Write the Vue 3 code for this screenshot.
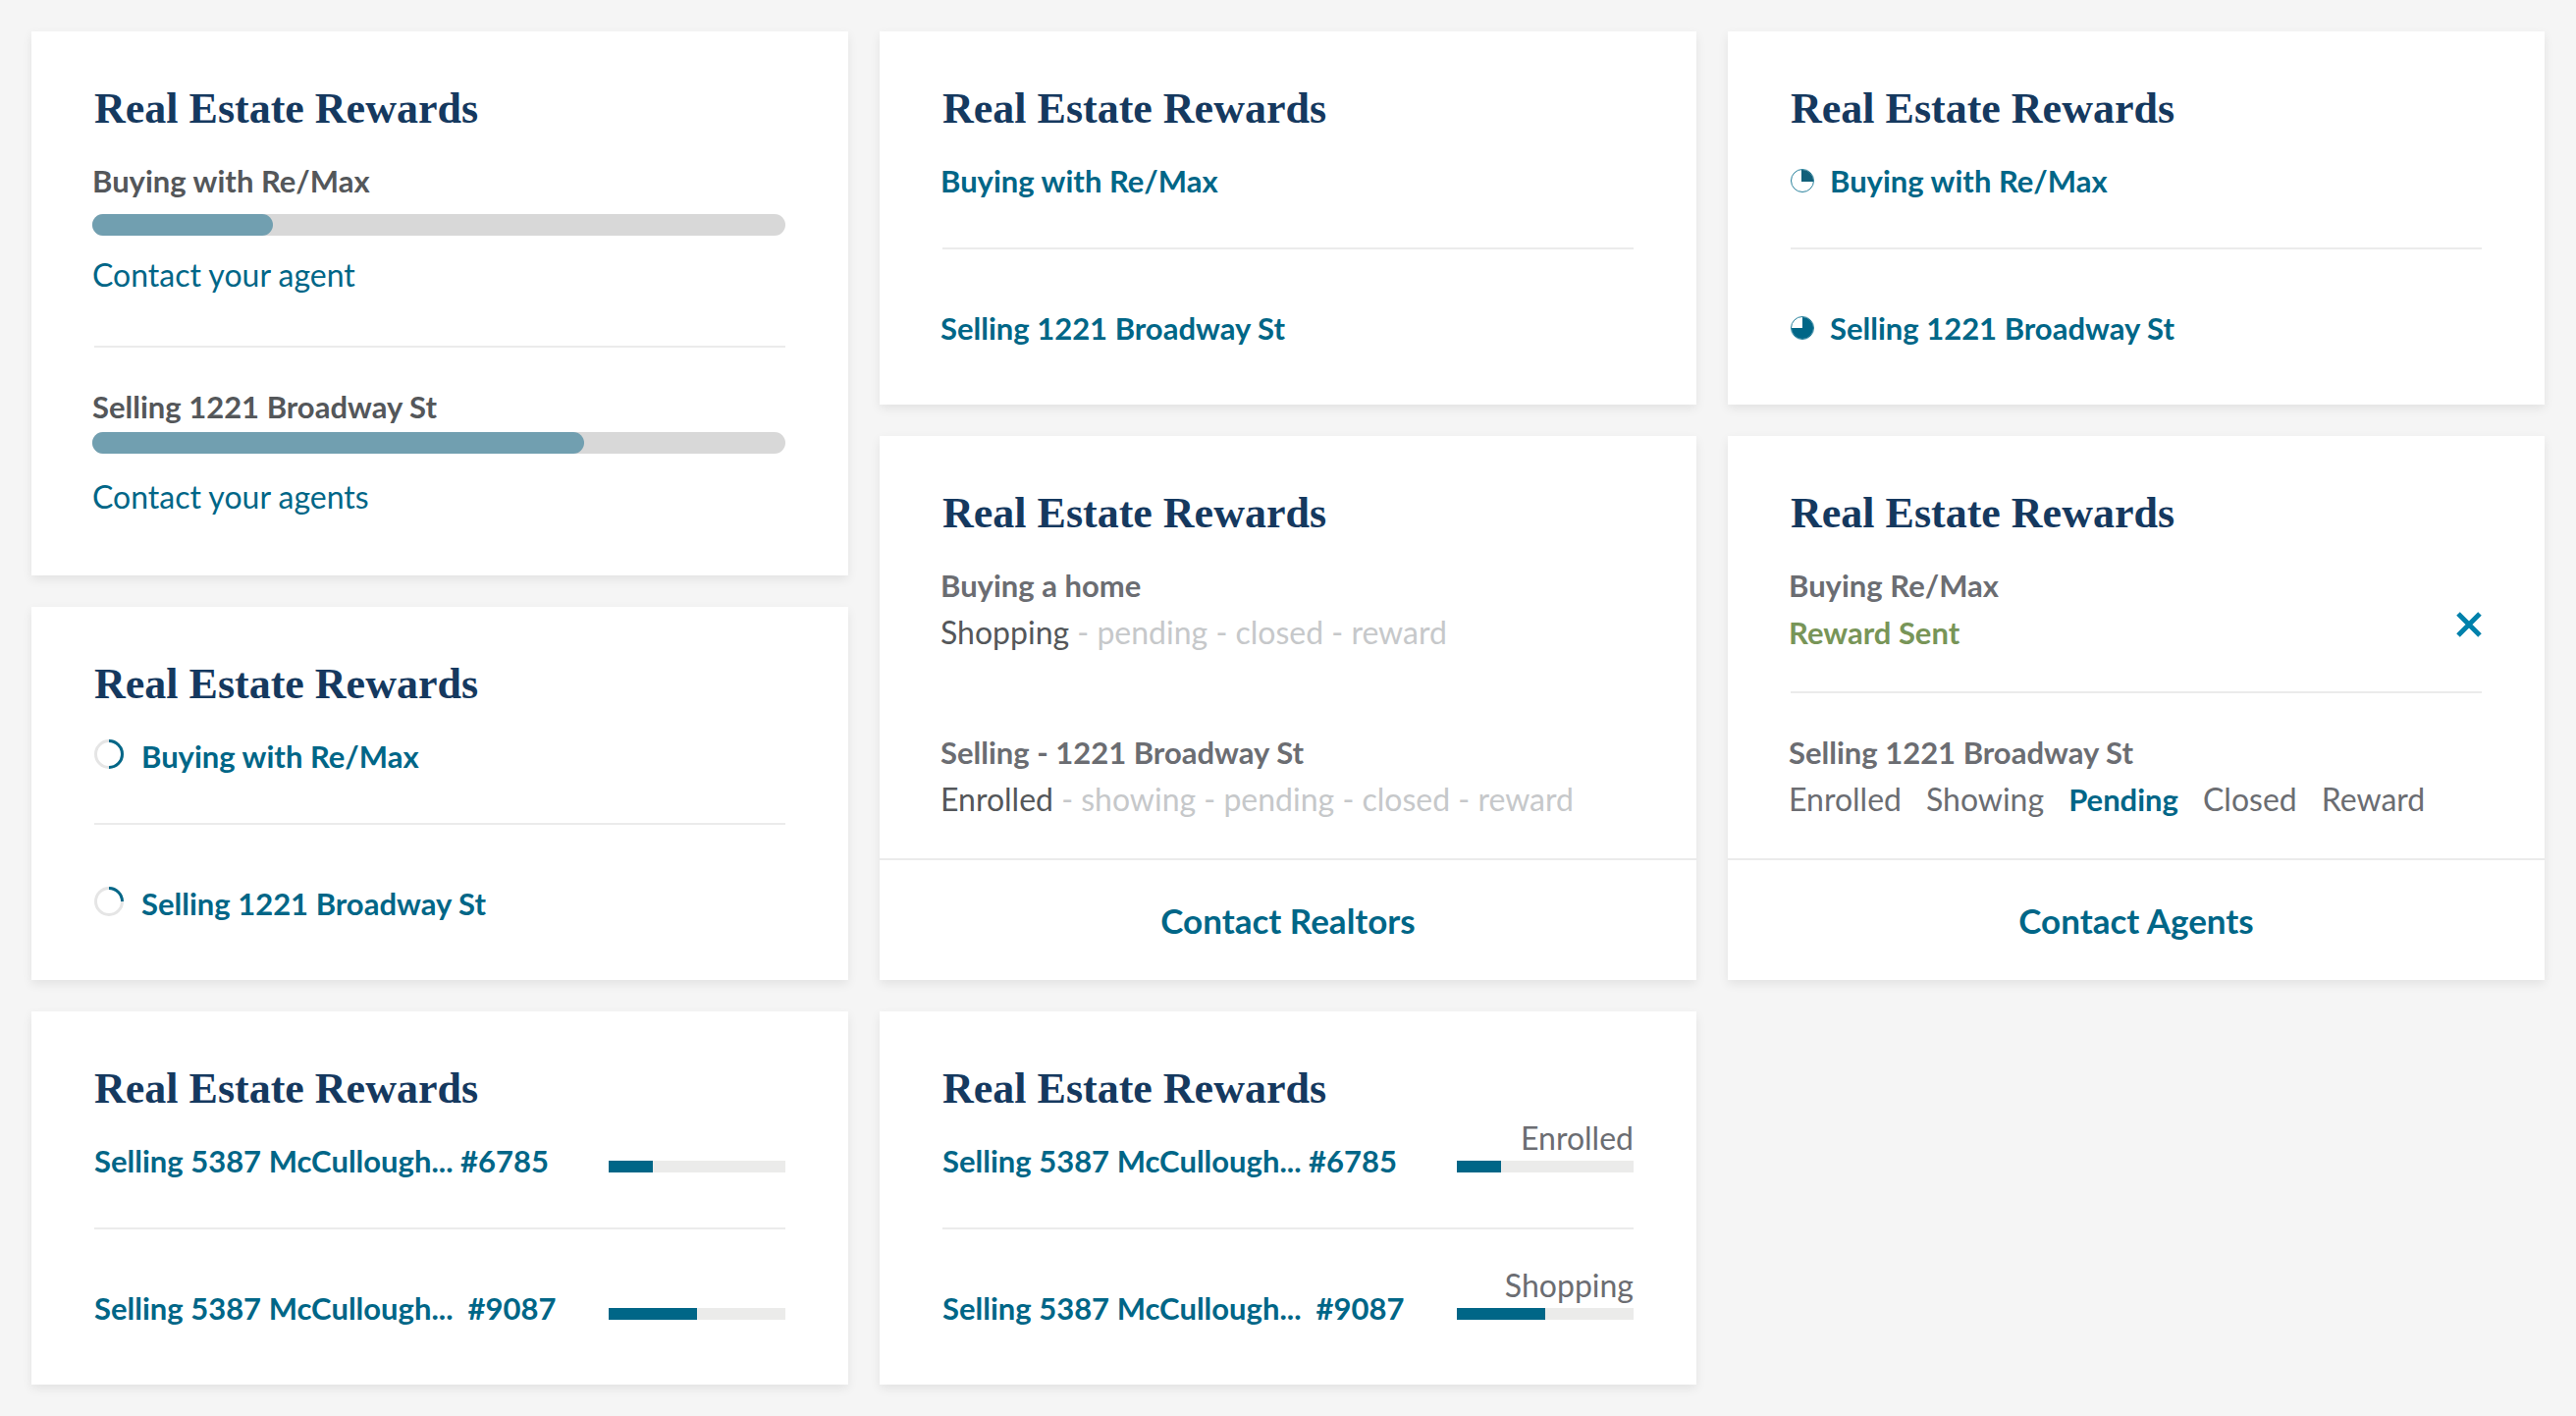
<script setup>
const title = 'Real Estate Rewards'

const barDeals = [
  { name: 'Buying with Re/Max', percent: 26, action: 'Contact your agent' },
  { name: 'Selling 1221 Broadway St', percent: 71, action: 'Contact your agents' },
]

// Rings are 30px wide; the arc is the completed share of the deal.
const ringDeals = [
  { name: 'Buying with Re/Max', arc: 'M15 1.5a13.5 13.5 0 0 1 0 27' },
  { name: 'Selling 1221 Broadway St', arc: 'M15 1.5a13.5 13.5 0 0 1 13.5 13.5' },
]

const linkDeals = ['Buying with Re/Max', 'Selling 1221 Broadway St']

const pieDeals = [
  { name: 'Buying with Re/Max', wedge: 'M11 13V1h1a11 11 0 0 1 11 11v1z', fill: '#12607a' },
  { name: 'Selling 1221 Broadway St', wedge: 'M12 12V1a11 11 0 1 1-11 11z', fill: '#006687' },
]

const meterDeals = [
  { name: 'Selling 5387 McCullough... #6785', percent: 25, stage: 'Enrolled' },
  { name: 'Selling 5387 McCullough...\u00a0 #9087', percent: 50, stage: 'Shopping' },
]

const trailDeals = [
  { name: 'Buying a home', current: 'Shopping', rest: ' - pending - closed - reward' },
  { name: 'Selling - 1221 Broadway St', current: 'Enrolled', rest: ' - showing - pending - closed - reward' },
]

const stages = ['Enrolled', 'Showing', 'Pending', 'Closed', 'Reward']
const currentStage = 'Pending'
</script>

<template>
  <main class="board">
    <div class="column">
      <section class="card">
        <h2 class="title">{{ title }}</h2>
        <div v-for="deal in barDeals" :key="deal.name" class="bar-deal">
          <p class="name dark hang">{{ deal.name }}</p>
          <div class="bar hang" role="progressbar" :aria-label="deal.name" :aria-valuenow="deal.percent">
            <div class="bar-fill" :style="{ width: deal.percent + '%' }"></div>
          </div>
          <a class="text-link hang" href="#">{{ deal.action }}</a>
        </div>
      </section>

      <section class="card">
        <h2 class="title">{{ title }}</h2>
        <div v-for="deal in ringDeals" :key="deal.name" class="row ring-row">
          <svg class="ring" width="30" height="30" viewBox="0 0 30 30" fill="none" stroke-width="3" aria-hidden="true">
            <circle cx="15" cy="15" r="13.5" stroke="#e5e5e5" />
            <path :d="deal.arc" stroke="#006687" />
          </svg>
          <a class="name" href="#">{{ deal.name }}</a>
        </div>
      </section>

      <section class="card">
        <h2 class="title">{{ title }}</h2>
        <div v-for="deal in meterDeals" :key="deal.name" class="row meter-row">
          <a class="name" href="#">{{ deal.name }}</a>
          <div class="meter" role="progressbar" :aria-label="deal.name" :aria-valuenow="deal.percent">
            <div class="meter-fill" :style="{ width: deal.percent + '%' }"></div>
          </div>
        </div>
      </section>
    </div>

    <div class="column">
      <section class="card">
        <h2 class="title">{{ title }}</h2>
        <div v-for="name in linkDeals" :key="name" class="row">
          <a class="name hang" href="#">{{ name }}</a>
        </div>
      </section>

      <section class="card with-footer">
        <h2 class="title">{{ title }}</h2>
        <div v-for="deal in trailDeals" :key="deal.name" class="stage-deal undivided">
          <p class="name grey hang">{{ deal.name }}</p>
          <p class="trail hang"><span class="trail-current">{{ deal.current }}</span>{{ deal.rest }}</p>
        </div>
        <footer class="footer"><a class="footer-link" href="#">Contact Realtors</a></footer>
      </section>

      <section class="card">
        <h2 class="title">{{ title }}</h2>
        <div v-for="deal in meterDeals" :key="deal.name" class="row meter-row">
          <a class="name" href="#">{{ deal.name }}</a>
          <div class="meter" role="progressbar" :aria-label="deal.name" :aria-valuenow="deal.percent">
            <span class="meter-label">{{ deal.stage }}</span>
            <div class="meter-fill" :style="{ width: deal.percent + '%' }"></div>
          </div>
        </div>
      </section>
    </div>

    <div class="column">
      <section class="card">
        <h2 class="title">{{ title }}</h2>
        <div v-for="deal in pieDeals" :key="deal.name" class="row pie-row">
          <svg class="pie" width="24" height="24" viewBox="0 0 24 24" aria-hidden="true">
            <circle cx="12" cy="12" r="11.5" fill="#fff" stroke="#28819c" />
            <path :d="deal.wedge" :fill="deal.fill" />
          </svg>
          <a class="name" href="#">{{ deal.name }}</a>
        </div>
      </section>

      <section class="card with-footer">
        <h2 class="title">{{ title }}</h2>
        <div class="stage-deal sent">
          <div>
            <p class="name grey hang">Buying Re/Max</p>
            <p class="name sent-label hang">Reward Sent</p>
          </div>
          <button class="dismiss" type="button" aria-label="Dismiss">
            <svg width="26" height="26" viewBox="0 0 26 26" stroke="#0081ab" stroke-width="5" aria-hidden="true">
              <path d="M2 2l22 22M24 2L2 24" />
            </svg>
          </button>
        </div>
        <div class="stage-deal">
          <p class="name grey hang">Selling 1221 Broadway St</p>
          <ol class="stages hang">
            <li v-for="stage in stages" :key="stage" :class="{ active: stage === currentStage }">{{ stage }}</li>
          </ol>
        </div>
        <footer class="footer"><a class="footer-link" href="#">Contact Agents</a></footer>
      </section>
    </div>
  </main>
</template>

<style>
body {
  background: #f5f5f5;
}
</style>

<style scoped>
.board {
  display: grid;
  grid-template-columns: repeat(3, minmax(0, 1fr));
  align-items: start;
  gap: 32px;
  padding: 32px;
  color: #6b6d72;
  font-family: Lato, sans-serif;
  font-size: 32px;
  line-height: 38px;
}

.column {
  display: grid;
  gap: 32px;
}

.card {
  padding: 54px 64px 59px;
  background: #fff;
  box-shadow: 0 4px 10px rgba(0, 0, 0, 0.08);
}

.card.with-footer {
  padding-bottom: 0;
}

.title {
  margin: 0 0 29px;
  color: #15395f;
  font: bold 44px/50px "Liberation Serif", serif;
}

p {
  margin: 0;
}

a {
  color: #006687;
  text-decoration: none;
}

.name {
  font-size: 31px;
  font-weight: 700;
}

.dark {
  color: #54575a;
}

.grey {
  color: #6b6d72;
}

/* Single-line deals */
.row {
  display: flex;
  align-items: center;
}

.row + .row {
  margin-top: 49px;
  padding-top: 61px;
  border-top: 2px solid #ebebeb;
}

.ring-row {
  gap: 18px;
}

.ring,
.pie {
  flex: none;
}

.ring {
  margin-bottom: 4px;
}

.pie-row {
  gap: 16px;
}

/* Deals with a wide rounded bar */
.bar-deal {
  padding-bottom: 1px;
}

.bar-deal + .bar-deal {
  margin-top: 51px;
  padding-top: 41px;
  border-top: 2px solid #ebebeb;
}

.bar {
  height: 22px;
  margin: 15px 0 20px;
  border-radius: 11px;
  background: #d8d8d8;
}

.bar-deal + .bar-deal .bar {
  margin-top: 7px;
  margin-bottom: 24px;
}

.bar-fill {
  height: 100%;
  border-radius: 11px;
  background: #719fb0;
}

.text-link {
  display: block;
  line-height: 40px;
}

/* Deals with a small meter on the right */
.meter-row {
  justify-content: space-between;
}

.meter {
  position: relative;
  flex: none;
  width: 180px;
  height: 12px;
  margin-top: 12px;
  background: #ebebea;
}

.meter-fill {
  height: 100%;
  background: #006687;
}

.meter-label {
  position: absolute;
  right: 0;
  bottom: 16px;
}

/* Deals with their stages */
.stage-deal {
  padding-bottom: 41px;
}

.stage-deal + .stage-deal {
  padding-top: 41px;
  border-top: 2px solid #ebebeb;
}

.stage-deal.undivided {
  border-top-color: transparent;
}

.trail,
.sent-label,
.stages {
  margin: 10px 0 0;
}

.trail {
  color: #c6c8ca;
}

.trail-current {
  color: #54575a;
}

.sent {
  display: flex;
  align-items: center;
  justify-content: space-between;
}

.sent-label {
  color: #789558;
}

.dismiss {
  display: flex;
  margin-top: 32px;
  padding: 0;
  border: 0;
  background: none;
  cursor: pointer;
}

.stages {
  display: flex;
  gap: 25px;
  padding: 0;
  list-style: none;
}

.active {
  color: #006687;
  font-size: 31px;
  font-weight: 700;
}

.footer {
  display: flex;
  justify-content: center;
  margin: 0 -64px;
  padding: 39px 0;
  border-top: 2px solid #ebebeb;
}

.footer-link {
  font-size: 35px;
  font-weight: 700;
  line-height: 44px;
}

/* Optical alignment of sans text and bars with the serif title */
.hang {
  margin-left: -2px;
}
</style>
